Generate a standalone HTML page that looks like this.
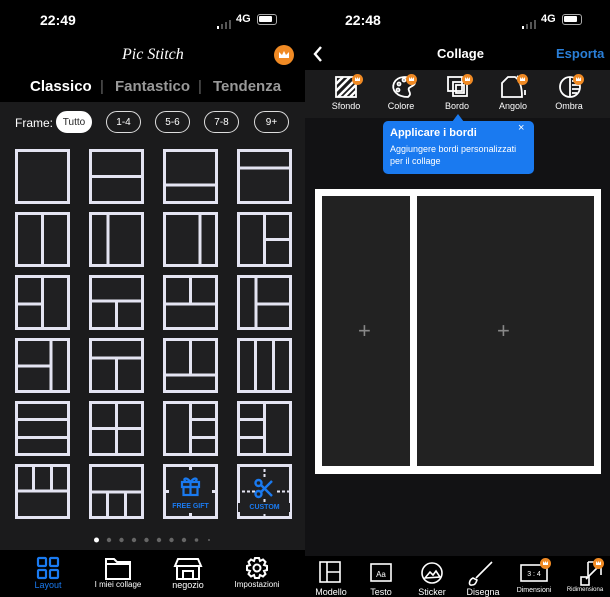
<!DOCTYPE html>
<html><head><meta charset="utf-8"><style>
*{margin:0;padding:0;box-sizing:border-box}
body{width:610px;height:596px;background:#000;font-family:"Liberation Sans",sans-serif;position:relative;overflow:hidden;color:#fff}
.a{position:absolute}
.st{font-weight:bold;font-size:14px}
.pill{position:absolute;top:111px;height:22px;border:1.5px solid #ddd;border-radius:11px;font-size:10px;display:flex;align-items:center;justify-content:center;color:#fff}
.lab{position:absolute;font-size:9px;color:#fff;text-align:center;width:70px}
.crown{position:absolute;width:11px;height:11px;border-radius:50%;background:#f08a24}
.crown:after{content:"";position:absolute;left:3px;top:3px;width:5px;height:4px;background:#fff;clip-path:polygon(0 100%,0 0,30% 50%,50% 0,70% 50%,100% 0,100% 100%)}
</style></head><body>
<!-- LEFT -->
<div class="a st" style="left:40px;top:12px">22:49</div>
<div class="a" style="left:217px;top:16px;width:14px;height:9px">
<svg width="14" height="9"><rect x="0" y="6" width="2" height="3" fill="#fff"/><rect x="4" y="4" width="2" height="5" fill="#555"/><rect x="8" y="2" width="2" height="7" fill="#555"/><rect x="12" y="0" width="2" height="9" fill="#555"/></svg></div>
<div class="a" style="left:236px;top:13px;font-size:11px;font-weight:bold">4G</div>
<div class="a" style="left:257px;top:14px;width:20px;height:11px;border:1.5px solid #aaa;border-radius:3px;padding:1px"><div style="background:#fff;width:13px;height:6px;border-radius:1px"></div></div>
<div class="a" style="left:122px;top:46px;font-family:'Liberation Serif',serif;font-style:italic;font-size:16px">Pic Stitch</div>
<div class="a" style="left:274px;top:45px;width:20px;height:20px;border-radius:50%;background:#f08a24"><svg width="20" height="20"><path d="M5 13 L5 7 L8 10 L10 6 L12 10 L15 7 L15 13 Z" fill="#fff"/></svg></div>
<div class="a" style="left:30px;top:78px;font-size:15px;font-weight:bold">Classico</div>
<div class="a" style="left:100px;top:78px;font-size:15px;color:#666">|</div>
<div class="a" style="left:115px;top:78px;font-size:15px;font-weight:bold;color:#999">Fantastico</div>
<div class="a" style="left:198px;top:78px;font-size:15px;color:#666">|</div>
<div class="a" style="left:213px;top:78px;font-size:15px;font-weight:bold;color:#999">Tendenza</div>
<div class="a" style="left:0;top:102px;width:305px;height:448px;background:#1b1b1c"></div>
<div class="a" style="left:15px;top:116px;font-size:12px">Frame:</div>
<div class="pill" style="left:56px;width:36px;background:#fff;color:#222;border-color:#fff">Tutto</div>
<div class="pill" style="left:106px;width:35px">1-4</div>
<div class="pill" style="left:155px;width:35px">5-6</div>
<div class="pill" style="left:204px;width:35px">7-8</div>
<div class="pill" style="left:254px;width:35px">9+</div>
<svg class="a" style="left:0;top:0" width="305" height="550">
<defs><symbol id="b" viewBox="0 0 55 55"><rect x="1.5" y="1.5" width="52" height="52" fill="#202022" stroke="#e4e4f2" stroke-width="3"/></symbol></defs>
<g stroke="#e4e4f2" stroke-width="3" fill="none">
<use href="#b" x="15" y="149" width="55" height="55"/>
<use href="#b" x="89" y="149" width="55" height="55"/><line x1="89" x2="144" y1="176.5" y2="176.5"/>
<use href="#b" x="163" y="149" width="55" height="55"/><line x1="163" x2="218" y1="185" y2="185"/>
<use href="#b" x="237" y="149" width="55" height="55"/><line x1="237" x2="292" y1="168" y2="168"/>
<use href="#b" x="15" y="212" width="55" height="55"/><line x1="42.5" x2="42.5" y1="212" y2="267"/>
<use href="#b" x="89" y="212" width="55" height="55"/><line x1="108" x2="108" y1="212" y2="267"/>
<use href="#b" x="163" y="212" width="55" height="55"/><line x1="200" x2="200" y1="212" y2="267"/>
<use href="#b" x="237" y="212" width="55" height="55"/><line x1="264.5" x2="264.5" y1="212" y2="267"/><line x1="264.5" x2="292" y1="239.5" y2="239.5"/>
<use href="#b" x="15" y="275" width="55" height="55"/><line x1="42.5" x2="42.5" y1="275" y2="330"/><line x1="15" x2="42.5" y1="304" y2="304"/>
<use href="#b" x="89" y="275" width="55" height="55"/><line x1="89" x2="144" y1="301" y2="301"/><line x1="116.5" x2="116.5" y1="301" y2="330"/>
<use href="#b" x="163" y="275" width="55" height="55"/><line x1="163" x2="218" y1="304" y2="304"/><line x1="190.5" x2="190.5" y1="275" y2="304"/>
<use href="#b" x="237" y="275" width="55" height="55"/><line x1="256" x2="256" y1="275" y2="330"/><line x1="256" x2="292" y1="304" y2="304"/>
<use href="#b" x="15" y="338" width="55" height="55"/><line x1="51" x2="51" y1="338" y2="393"/><line x1="15" x2="51" y1="366" y2="366"/>
<use href="#b" x="89" y="338" width="55" height="55"/><line x1="89" x2="144" y1="358" y2="358"/><line x1="116.5" x2="116.5" y1="358" y2="393"/>
<use href="#b" x="163" y="338" width="55" height="55"/><line x1="163" x2="218" y1="375" y2="375"/><line x1="190.5" x2="190.5" y1="338" y2="375"/>
<use href="#b" x="237" y="338" width="55" height="55"/><line x1="255.5" x2="255.5" y1="338" y2="393"/><line x1="273.5" x2="273.5" y1="338" y2="393"/>
<use href="#b" x="15" y="401" width="55" height="55"/><line x1="15" x2="70" y1="419.5" y2="419.5"/><line x1="15" x2="70" y1="437.5" y2="437.5"/>
<use href="#b" x="89" y="401" width="55" height="55"/><line x1="116.5" x2="116.5" y1="401" y2="456"/><line x1="89" x2="144" y1="428.5" y2="428.5"/>
<use href="#b" x="163" y="401" width="55" height="55"/><line x1="190.5" x2="190.5" y1="401" y2="456"/><line x1="190.5" x2="218" y1="419.5" y2="419.5"/><line x1="190.5" x2="218" y1="437.5" y2="437.5"/>
<use href="#b" x="237" y="401" width="55" height="55"/><line x1="264.5" x2="264.5" y1="401" y2="456"/><line x1="237" x2="264.5" y1="419.5" y2="419.5"/><line x1="237" x2="264.5" y1="437.5" y2="437.5"/>
<use href="#b" x="15" y="464" width="55" height="55"/><line x1="15" x2="70" y1="491" y2="491"/><line x1="33.5" x2="33.5" y1="464" y2="491"/><line x1="51.5" x2="51.5" y1="464" y2="491"/>
<use href="#b" x="89" y="464" width="55" height="55"/><line x1="89" x2="144" y1="492" y2="492"/><line x1="107.5" x2="107.5" y1="492" y2="519"/><line x1="125.5" x2="125.5" y1="492" y2="519"/>
<use href="#b" x="163" y="464" width="55" height="55"/><line x1="190.5" x2="190.5" y1="464" y2="470"/><line x1="190.5" x2="190.5" y1="513" y2="519"/><line x1="163" x2="169" y1="491.5" y2="491.5"/><line x1="212" x2="218" y1="491.5" y2="491.5"/>
<use href="#b" x="237" y="464" width="55" height="55"/><g stroke-dasharray="3 2" stroke-width="2"><line x1="264.5" x2="264.5" y1="464" y2="519"/><line x1="237" x2="292" y1="491.5" y2="491.5"/></g>
</g>
<g fill="none" stroke="#1a7af0" stroke-width="2.2"><rect x="182" y="482" width="17" height="5"/><rect x="183.5" y="487" width="14" height="8"/><line x1="190.5" x2="190.5" y1="482" y2="495"/><path d="M190.5 482 C186 476 182 479 186 482 M190.5 482 C195 476 199 479 195 482"/></g>
<text x="190.5" y="508" font-size="7" font-weight="bold" fill="#1a7af0" text-anchor="middle" font-family="Liberation Sans">FREE GIFT</text>
<rect x="255" y="479" width="20" height="20" fill="#202022"/>
<g fill="none" stroke="#1a7af0" stroke-width="2.4"><circle cx="258.5" cy="483" r="3"/><circle cx="258.5" cy="494" r="3"/><line x1="261" x2="272" y1="485" y2="496"/><line x1="261" x2="272" y1="492" y2="481"/></g>
<rect x="238" y="503" width="52" height="9" fill="#202022"/>
<text x="264.5" y="509" font-size="7" font-weight="bold" fill="#1a7af0" text-anchor="middle" font-family="Liberation Sans">CUSTOM</text>
<g fill="#666"><circle cx="96.5" cy="540" r="2.5" fill="#fff"/><circle cx="109" cy="540" r="2.2"/><circle cx="121.5" cy="540" r="2.2"/><circle cx="134" cy="540" r="2.2"/><circle cx="146.5" cy="540" r="2.2"/><circle cx="159" cy="540" r="2.2"/><circle cx="171.5" cy="540" r="2.2"/><circle cx="184" cy="540" r="2.2"/><circle cx="196.5" cy="540" r="1.8"/><circle cx="209" cy="540" r="1"/></g>
</svg>
<svg class="a" style="left:0;top:550px" width="305" height="46">
<g fill="none" stroke="#1a7af0" stroke-width="2.2"><rect x="38" y="8" width="8" height="8" rx="1"/><rect x="50" y="8" width="8" height="8" rx="1"/><rect x="38" y="20" width="8" height="8" rx="1"/><rect x="50" y="20" width="8" height="8" rx="1"/></g>
<path d="M106 29 V9 H114 L117 12 H130 V29 Z M106 14 H130" fill="none" stroke="#fff" stroke-width="2"/>
<g fill="none" stroke="#fff" stroke-width="2"><path d="M178 9 H198 L201 16 H175 Z"/><path d="M177 16 V29 H199 V16"/><rect x="183" y="21" width="10" height="8"/></g>
<g fill="none" stroke="#fff" stroke-width="2"><circle cx="257" cy="18" r="3.5"/><path d="M255 8 h4 l1 3 l3 -1.5 l2.5 2.5 l-1.5 3 l3 1 v4 l-3 1 l1.5 3 l-2.5 2.5 l-3 -1.5 l-1 3 h-4 l-1 -3 l-3 1.5 l-2.5 -2.5 l1.5 -3 l-3 -1 v-4 l3 -1 l-1.5 -3 l2.5 -2.5 l3 1.5 Z"/></g>
</svg>
<div class="lab" style="left:13px;top:580px;color:#1a7af0">Layout</div>
<div class="lab" style="left:83px;top:580px;font-size:8px">I miei collage</div>
<div class="lab" style="left:153px;top:580px">negozio</div>
<div class="lab" style="left:222px;top:580px;font-size:8px">Impostazioni</div>

<!-- RIGHT -->
<div class="a" style="left:305px;top:70px;width:305px;height:486px;background:#121214"></div>
<div class="a" style="left:305px;top:70px;width:305px;height:48px;background:#1b1b1c"></div>
<div class="a st" style="left:345px;top:12px">22:48</div>
<div class="a" style="left:522px;top:16px"><svg width="14" height="9"><rect x="0" y="6" width="2" height="3" fill="#fff"/><rect x="4" y="4" width="2" height="5" fill="#555"/><rect x="8" y="2" width="2" height="7" fill="#555"/><rect x="12" y="0" width="2" height="9" fill="#555"/></svg></div>
<div class="a" style="left:541px;top:13px;font-size:11px;font-weight:bold">4G</div>
<div class="a" style="left:562px;top:14px;width:20px;height:11px;border:1.5px solid #aaa;border-radius:3px;padding:1px"><div style="background:#fff;width:13px;height:6px;border-radius:1px"></div></div>
<svg class="a" style="left:312px;top:45px" width="12" height="18"><path d="M9 2 L3 9 L9 16" fill="none" stroke="#fff" stroke-width="2.4"/></svg>
<div class="a" style="left:437px;top:46px;font-size:13px;font-weight:bold">Collage</div>
<div class="a" style="left:556px;top:46px;font-size:13px;font-weight:bold;color:#2a7fd8">Esporta</div>
<svg class="a" style="left:305px;top:70px" width="305" height="40">
<g fill="none" stroke="#fff" stroke-width="1.8">
<rect x="31" y="7" width="20" height="20"/><path d="M31 14 L38 7 M31 21 L45 7 M33 27 L51 9 M39 27 L51 15 M45 27 L51 21" stroke-width="2.5"/>
<path d="M103 27 C92 27 86 20 89 13 C92 6 104 5 109 11 C112 15 106 16 104 18 C102 21 108 23 103 27 Z"/><circle cx="94" cy="14" r="1.5"/><circle cx="99" cy="10" r="1.5"/><circle cx="93" cy="20" r="1.5"/>
<rect x="143" y="7" width="14" height="14"/><rect x="148" y="12" width="14" height="14"/><rect x="151" y="15" width="8" height="8"/>
<path d="M197 27 V13 L203 7 H210 C215 10 217 17 217 27 Z"/><path d="M212 6 L216 9 M220 20 L220 25"/>
<circle cx="265" cy="17" r="10"/><path d="M265 7 V27"/><path d="M267 11 H272 M267 15 H274 M267 19 H274 M267 23 H272"/>
</g></svg>
<div class="crown" style="left:352px;top:74px"></div><div class="crown" style="left:406px;top:74px"></div><div class="crown" style="left:462px;top:74px"></div><div class="crown" style="left:517px;top:74px"></div><div class="crown" style="left:573px;top:74px"></div>
<div class="lab" style="left:311px;top:101px">Sfondo</div>
<div class="lab" style="left:366px;top:101px">Colore</div>
<div class="lab" style="left:422px;top:101px">Bordo</div>
<div class="lab" style="left:478px;top:101px">Angolo</div>
<div class="lab" style="left:534px;top:101px">Ombra</div>
<div class="a" style="left:452px;top:114px;width:0;height:0;border-left:6px solid transparent;border-right:6px solid transparent;border-bottom:8px solid #1a7af0"></div>
<div class="a" style="left:383px;top:121px;width:151px;height:53px;background:#1a7af0;border-radius:5px"></div>
<div class="a" style="left:390px;top:127px;font-size:11px;font-weight:bold">Applicare i bordi</div>
<div class="a" style="left:518px;top:122px;font-size:11px">×</div>
<div class="a" style="left:390px;top:143px;font-size:9px;line-height:12px;width:140px">Aggiungere bordi personalizzati per il collage</div>
<div class="a" style="left:315px;top:189px;width:286px;height:285px;background:#fff"></div>
<div class="a" style="left:322px;top:196px;width:88px;height:270px;background:#222"></div>
<div class="a" style="left:417px;top:196px;width:177px;height:270px;background:#222"></div>
<div class="a" style="left:358px;top:318px;font-size:22px;color:#888">+</div>
<div class="a" style="left:497px;top:318px;font-size:22px;color:#888">+</div>
<svg class="a" style="left:305px;top:556px" width="305" height="40">
<g fill="none" stroke="#fff" stroke-width="1.6">
<rect x="15" y="6" width="20" height="20"/><path d="M22 6 V26 M22 16 H35"/>
<rect x="66" y="8" width="20" height="17"/>
<circle cx="127" cy="17" r="10"/><path d="M120 22 L125 16 L128 19 L131 15 L135 21 Z"/>
<path d="M167 29 C163 30 164 24 168 22 L172 24 C171 27 170 29 167 29 Z M171 22 L187 6"/>
<rect x="216" y="9" width="26" height="16"/>
<rect x="276" y="21" width="8" height="8"/><path d="M283 6 H296 V19 M283 6 V20 M281 23 L296 8"/>
</g>
<text x="76" y="21" font-size="8" fill="#fff" text-anchor="middle" font-family="Liberation Sans">Aa</text>
<text x="229" y="20" font-size="7" fill="#fff" text-anchor="middle" font-family="Liberation Sans">3 : 4</text>
</svg>
<div class="crown" style="left:540px;top:558px"></div><div class="crown" style="left:593px;top:558px"></div>
<div class="lab" style="left:296px;top:587px">Modello</div>
<div class="lab" style="left:346px;top:587px">Testo</div>
<div class="lab" style="left:397px;top:587px">Sticker</div>
<div class="lab" style="left:448px;top:587px">Disegna</div>
<div class="lab" style="left:499px;top:587px;font-size:7px">Dimensioni</div>
<div class="lab" style="left:550px;top:587px;font-size:6px">Ridimensiona</div>
</body></html>
